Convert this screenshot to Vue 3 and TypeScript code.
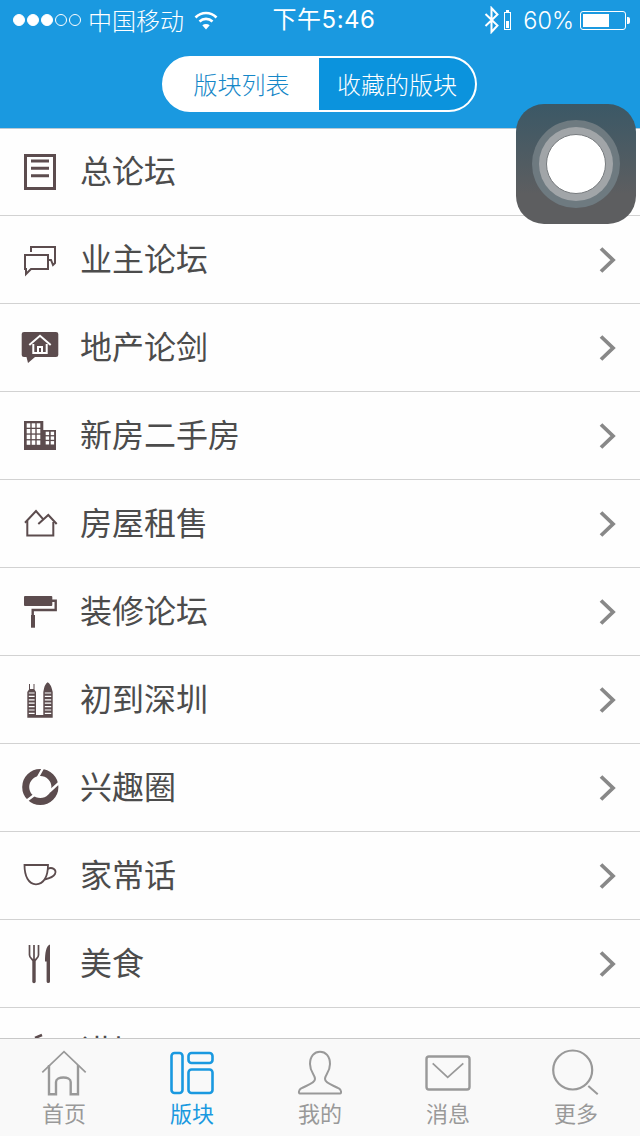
<script setup lang="ts">
const rows = [
  { name: '总论坛', icon: 'doc', arrow: false },
  { name: '业主论坛', icon: 'chat', arrow: true },
  { name: '地产论剑', icon: 'talk', arrow: true },
  { name: '新房二手房', icon: 'city', arrow: true },
  { name: '房屋租售', icon: 'house', arrow: true },
  { name: '装修论坛', icon: 'roller', arrow: true },
  { name: '初到深圳', icon: 'tower', arrow: true },
  { name: '兴趣圈', icon: 'ring', arrow: true },
  { name: '家常话', icon: 'cup', arrow: true },
  { name: '美食', icon: 'food', arrow: true },
  { name: '讲坛', icon: 'none', arrow: true },
]
const tabs = [
  { name: '首页', icon: 'home' },
  { name: '版块', icon: 'board' },
  { name: '我的', icon: 'me' },
  { name: '消息', icon: 'mail' },
  { name: '更多', icon: 'search' },
]
const bigCols = [6.7, 11.7, 16.7]
const bigRows = [9.3, 15, 20.7, 26.4]
const smallCols = [25.7, 30.7]
const smallRows = [17.7, 22.4, 27.1]
const stripes = [15, 18.4, 21.8, 25.2, 28.6, 32, 35.4]
</script>

<template>
  <div class="phone">
    <header class="top">
      <div class="status">
        <div class="status-left">
          <div class="signal">
            <i v-for="n in 3" :key="n" class="dot on"></i>
            <i v-for="n in 2" :key="n" class="dot"></i>
          </div>
          <span class="carrier">中国移动</span>
          <svg class="wifi" width="24" height="20" viewBox="0 0 24 20" fill="none" stroke="#fff" stroke-width="2.6">
            <path d="M1.5 7.5C7.5 1.5 16.5 1.5 22.5 7.5" />
            <path d="M5.5 11.5C9.3 8 14.7 8 18.5 11.5" />
            <path d="M12 19.5L8.3 15.2C10.5 13.6 13.5 13.6 15.7 15.2Z" fill="#fff" stroke="none" />
          </svg>
        </div>
        <div class="time">下午5:46</div>
        <div class="status-right">
          <svg width="16" height="28" viewBox="0 0 16 28" fill="none" stroke="#fff" stroke-width="2">
            <path d="M1.5 8L13.5 19.5L7.5 26V2L13.5 8.5L1.5 20" />
          </svg>
          <div class="mini-batt"><b></b></div>
          <span class="percent">60%</span>
          <div class="batt"><b></b></div>
        </div>
      </div>
      <div class="nav">
        <div class="segment">
          <div class="seg-item active">版块列表</div>
          <div class="seg-item">收藏的版块</div>
        </div>
      </div>
    </header>

    <div class="list">
      <div v-for="r in rows" :key="r.name" class="row">
        <svg class="row-icon" width="40" height="44" viewBox="0 0 40 44" fill="none" stroke="#5c4c4e">
          <g v-if="r.icon === 'doc'" stroke-width="3">
            <rect x="5.5" y="5.5" width="29" height="33" />
            <path d="M11 11H29M11 18.3H29M11 25.7H29" />
          </g>
          <g v-else-if="r.icon === 'chat'" stroke-width="2">
            <path d="M11 14V9H35V25L33 27L31 22H29" />
            <path d="M5 17H28V31H11L6 36V31H5Z" />
          </g>
          <g v-else-if="r.icon === 'talk'">
            <path d="M4 6H36Q38.3 6 38.3 8V29Q38.3 31 36 31H15L8 37L6.5 31H4Q1.7 31 1.7 29V8Q1.7 6 4 6Z" fill="#5c4c4e" stroke="none" />
            <path d="M9.3 19L20 9.7L30.7 19M13.3 18V27H26.7V18M18 27V21H22V27" stroke="#fff" stroke-width="2" />
          </g>
          <g v-else-if="r.icon === 'city'">
            <path d="M4 7H23.3V16H36V36H4Z" fill="#5c4c4e" stroke="none" />
            <g fill="#fff" stroke="none">
              <template v-for="c in bigCols" :key="c">
                <rect v-for="w in bigRows" :key="w" :x="c" :y="w" width="3.6" height="4.4" />
              </template>
              <template v-for="c in smallCols" :key="c">
                <rect v-for="w in smallRows" :key="w" :x="c" :y="w" width="3.4" height="3.4" />
              </template>
            </g>
          </g>
          <g v-else-if="r.icon === 'house'" stroke-width="2">
            <path d="M5 20.7L16 9L23.3 17.3M18.3 22L28.3 13L36.7 22" />
            <path d="M7.3 19V33.5H33.3V20" />
          </g>
          <g v-else-if="r.icon === 'roller'">
            <rect x="4" y="6" width="28.3" height="10" rx="1" fill="#5c4c4e" stroke="none" />
            <path d="M32 10.7H35.7V20H12.7V26" stroke-width="2.4" />
            <rect x="11" y="25" width="4" height="12.7" fill="#5c4c4e" stroke="none" />
          </g>
          <g v-else-if="r.icon === 'tower'">
            <path d="M7.3 39.7V14L9 11.5V6H10V11H13.5V6H14.5V11.5L16 14V37H23.3V14Q24.5 6 27.7 4.3Q31 6 32.7 14V39.7Z" fill="#5c4c4e" stroke="none" />
            <g stroke="#fff" stroke-width="1.2">
              <path v-for="s in stripes" :key="s" :d="`M8.8 ${s}H14.6M24.8 ${s}H31.2`" />
            </g>
          </g>
          <g v-else-if="r.icon === 'ring'">
            <circle cx="20.3" cy="21" r="14.6" stroke-width="7" />
            <path d="M23 2L17.5 12M40 16L29.5 25.5M15 28.5L5 36" stroke="#fff" stroke-width="2.4" />
          </g>
          <g v-else-if="r.icon === 'cup'" stroke-width="1.8">
            <path d="M4.5 11H28C28 22 24 30.3 16 30.3C8.5 30.3 4.5 22 4.5 11Z" />
            <path d="M27.5 15C32 12.5 37 15.5 35 20C33.5 23 29 24.5 24.5 25.5" />
          </g>
          <g v-else-if="r.icon === 'food'">
            <path d="M9.5 3V13C9.5 17 14 17 14 21M14 3V21M18.5 3V13C18.5 17 14 17 14 21" stroke-width="1.7" />
            <path d="M14 20V39.5" stroke-width="3.4" stroke-linecap="round" />
            <path d="M30 2.5C26 4 25 11 25 19.5H26.6V39.5Q26.6 41 28.3 41Q30 41 30 39.5Z" fill="#5c4c4e" stroke="none" />
          </g>
          <path v-else d="M15 8L22 5" stroke-width="2.5" />
        </svg>
        <span class="row-name">{{ r.name }}</span>
        <svg v-if="r.arrow" class="chevron" width="18" height="28" viewBox="0 0 18 28" fill="none" stroke="#888" stroke-width="3.8">
          <path d="M2 2.5L14 14L2 25.5" />
        </svg>
      </div>
    </div>

    <nav class="tabbar">
      <div v-for="t in tabs" :key="t.name" class="tab" :class="{ current: t.icon === 'board' }">
        <svg width="48" height="48" viewBox="0 0 48 48" fill="none" stroke="#999" stroke-width="2">
          <g v-if="t.icon === 'home'">
            <path d="M2.3 24.3L24 3.7L45.7 24.3" stroke-width="1.7" />
            <path d="M9 17V46.3H16V34C16 28 30.7 28 30.7 34V46.3H38V17" stroke-width="2.4" />
          </g>
          <g v-else-if="t.icon === 'board'" stroke="#1a99e0" stroke-width="2.6">
            <rect x="3.5" y="5" width="11" height="40" rx="3" />
            <rect x="20.5" y="5" width="24" height="10" rx="3" />
            <rect x="20.5" y="21.5" width="24" height="23.5" rx="3" />
          </g>
          <path v-else-if="t.icon === 'me'" d="M4 45.5H44C46 45.5 45 41.5 43 40.5C38 37.5 29 35.5 29 31C29 27 34 24 34 16C34 8 29.5 3.7 24 3.7C18.5 3.7 14 8 14 16C14 24 19 27 19 31C19 35.5 10 37.5 5 40.5C3 41.5 2 45.5 4 45.5Z" />
          <g v-else-if="t.icon === 'mail'" stroke-width="2.4">
            <rect x="2.5" y="8.5" width="43" height="33" rx="2.5" />
            <path d="M8.7 15.3L23.7 29.3L39.3 15.3" stroke-width="1.8" />
          </g>
          <g v-else>
            <circle cx="20.7" cy="22" r="19.5" stroke-width="2.2" />
            <path d="M36.3 38L45.7 46.3" />
          </g>
        </svg>
        <span class="tab-name">{{ t.name }}</span>
      </div>
    </nav>

    <div class="assist">
      <div class="assist-ring outer">
        <div class="assist-ring mid">
          <div class="assist-ring core"></div>
        </div>
      </div>
    </div>
  </div>
</template>

<style>
html, body {
  margin: 0;
  background: #fff;
}
</style>

<style scoped>
.phone {
  position: relative;
  width: 640px;
  height: 1136px;
  overflow: hidden;
  display: flex;
  flex-direction: column;
  background: #fefefe;
  font-family: "Noto Sans CJK SC", "Noto Sans", sans-serif;
}

.top {
  height: 129px;
  flex: none;
  box-sizing: border-box;
  background: #1a99e0;
  border-bottom: 1px solid #b9c9d4;
  color: #fff;
}

.status {
  height: 40px;
  display: grid;
  grid-template-columns: 1fr auto 1fr;
  align-items: center;
}

.status-left {
  display: flex;
  align-items: center;
  padding-left: 13px;
}

.signal {
  display: flex;
  gap: 2px;
}

.dot {
  width: 12px;
  height: 12px;
  box-sizing: border-box;
  border: 1px solid #fff;
  border-radius: 50%;
}

.dot.on {
  background: #fff;
}

.carrier {
  margin-left: 7px;
  font-size: 24px;
  line-height: 40px;
  font-weight: 300;
}

.wifi {
  margin-left: 10px;
}

.time {
  font-family: Inter, "Noto Sans CJK SC", sans-serif;
  font-size: 24px;
  font-weight: 400;
  line-height: 40px;
  letter-spacing: 0.5px;
  transform: translateX(4px);
}

.status-right {
  display: flex;
  align-items: center;
  justify-content: flex-end;
  padding-right: 11px;
}

.mini-batt {
  position: relative;
  width: 7px;
  height: 18px;
  margin-left: 4px;
  margin-top: 2px;
  box-sizing: border-box;
  border: 1px solid #fff;
}

.mini-batt::before {
  content: "";
  position: absolute;
  left: 1px;
  top: -3px;
  width: 3px;
  height: 2px;
  background: #fff;
}

.mini-batt b {
  position: absolute;
  left: 1px;
  right: 1px;
  bottom: 1px;
  height: 7px;
  background: #fff;
}

.percent {
  margin-left: 12px;
  font-family: Inter, sans-serif;
  font-size: 23.5px;
  font-weight: 300;
}

.batt {
  position: relative;
  width: 46px;
  height: 19px;
  margin-left: 6px;
  margin-right: 3px;
  box-sizing: border-box;
  border: 1px solid #fff;
  border-radius: 3px;
  padding: 2px;
}

.batt b {
  display: block;
  width: 26px;
  height: 100%;
  background: #fff;
}

.batt::after {
  content: "";
  position: absolute;
  right: -5px;
  top: 5px;
  width: 3px;
  height: 7px;
  background: #fff;
  border-radius: 0 2px 2px 0;
}

.nav {
  display: flex;
  justify-content: center;
  padding-top: 16px;
}

.segment {
  display: flex;
  width: 315px;
  height: 56px;
  margin-left: -1px;
  box-sizing: border-box;
  border: 2px solid #fff;
  border-radius: 28px;
  background: #fff;
}

.seg-item {
  display: flex;
  align-items: center;
  justify-content: center;
  flex: 1;
  padding-bottom: 2px;
  font-size: 24px;
  font-weight: 300;
  background: #0b93dd;
  border-radius: 0 26px 26px 0;
}

.seg-item.active {
  flex: none;
  width: 155px;
  background: #fff;
  color: #1587c8;
  border-radius: 26px 0 0 26px;
}

.list {
  flex: 1;
  min-height: 0;
  overflow: hidden;
}

.row {
  display: flex;
  align-items: center;
  height: 88px;
  box-sizing: border-box;
  border-bottom: 1px solid #d2d2d2;
  padding-left: 20px;
  padding-right: 23px;
}

.row:first-child {
  height: 87px;
}

.row-icon {
  flex: none;
}

.row-name {
  flex: 1;
  margin-left: 20px;
  padding-bottom: 6px;
  font-size: 32px;
  font-weight: 400;
  color: #4c4c4c;
}

.chevron {
  flex: none;
}

.tabbar {
  display: grid;
  grid-template-columns: repeat(5, 1fr);
  flex: none;
  height: 98px;
  box-sizing: border-box;
  border-top: 1px solid #c8c8c8;
  background: #f9f9f9;
}

.tab {
  display: flex;
  flex-direction: column;
  align-items: center;
  padding-top: 9px;
  color: #999;
}

.tab.current {
  color: #1a99e0;
}

.tab-name {
  font-size: 22px;
  line-height: 30px;
  margin-top: 1px;
}

.assist {
  position: absolute;
  left: 516px;
  top: 104px;
  width: 120px;
  height: 120px;
  display: flex;
  align-items: center;
  justify-content: center;
  border-radius: 28px;
  background: linear-gradient(#3b5866, #5d5e60 75%);
}

.assist-ring {
  display: flex;
  align-items: center;
  justify-content: center;
  border-radius: 50%;
}

.assist-ring.outer {
  width: 88px;
  height: 88px;
  background: #6e7a80;
}

.assist-ring.mid {
  width: 74px;
  height: 74px;
  background: #a1a5a8;
}

.assist-ring.core {
  width: 60px;
  height: 60px;
  box-sizing: border-box;
  background: #fff;
  border: 1px solid #777b7e;
}
</style>
